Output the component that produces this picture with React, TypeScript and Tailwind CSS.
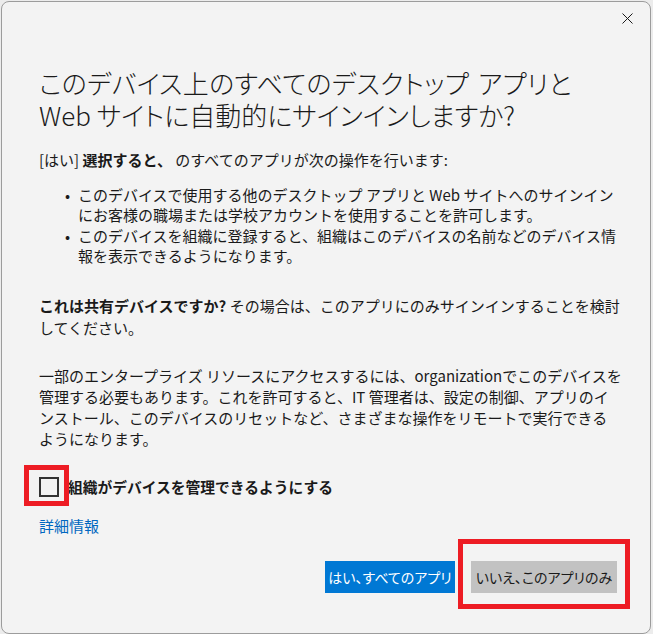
import React from "react";

const font = "font-['Noto_Sans_CJK_JP','Noto_Sans',sans-serif]";

export default function App() {
  return (
    <div className={`w-[653px] h-[634px] bg-[#ececec] pl-[1px] pt-[1px] ${font}`}>
      <div className="relative w-[650px] h-[633px] bg-[#f3f3f3] border border-[#9c9c9c] rounded-[8px] flex flex-col text-[#1a1a1a]">
        <div className="flex justify-end pt-[11px] pr-[17px]">
          <svg width="11" height="11" viewBox="0 0 11 11" className="text-[#1a1a1a]">
            <path d="M0.5 0.5 L10.5 10.5 M10.5 0.5 L0.5 10.5" stroke="currentColor" strokeWidth="1" fill="none" />
          </svg>
        </div>
        <div className="pl-[37px] pr-[30px] text-[15px]">
          <h1 className="mt-[43px] text-[26px] leading-[32px] font-[300] whitespace-nowrap [font-feature-settings:'palt']">
            <span className="[word-spacing:3px] tracking-[0.3px]">このデバイス上のすべてのデスクトップ アプリと</span><br />
            Web サイトに自動的にサインインしますか?
          </h1>
          <p className="mt-[18px] leading-[21px] whitespace-nowrap">
            [はい] <span className="font-bold">選択すると、</span> のすべてのアプリが次の操作を行います:
          </p>
          <ul className="mt-[15px] leading-[20px] whitespace-nowrap">
            <li className="flex">
              <span className="w-[39px] pl-[26px]">•</span>
              <span>
                このデバイスで使用する他のデスクトップ アプリと Web サイトへのサインイン<br />
                にお客様の職場または学校アカウントを使用することを許可します。
              </span>
            </li>
            <li className="flex mt-[1px]">
              <span className="w-[39px] pl-[26px]">•</span>
              <span>
                このデバイスを組織に登録すると、組織はこのデバイスの名前などのデバイス情<br />
                報を表示できるようになります。
              </span>
            </li>
          </ul>
          <p className="mt-[29px] leading-[22px] whitespace-nowrap">
            <span className="font-bold">これは共有デバイスですか?</span> その場合は、このアプリにのみサインインすることを検討<br />
            してください。
          </p>
          <p className="mt-[26px] leading-[21px] whitespace-nowrap">
            一部のエンタープライズ リソースにアクセスするには、organizationでこのデバイスを<br />
            管理する必要もあります。これを許可すると、IT 管理者は、設定の制御、アプリのイ<br />
            ンストール、このデバイスのリセットなど、さまざまな操作をリモートで実行できる<br />
            ようになります。
          </p>
          <div className="mt-[27px] flex items-center">
            <div className="relative w-[20px] h-[20px] border-2 border-[#333333] bg-[#f3f3f3]">
              <div className="absolute left-[-17px] top-[-14px] w-[45px] h-[41px] border-[5px] border-[#ed1c24]" />
            </div>
            <span className="ml-[9px] text-[14.75px] font-bold whitespace-nowrap">組織がデバイスを管理できるようにする</span>
          </div>
          <div className="mt-[18px] leading-[20px] text-[#0067c0]">詳細情報</div>
        </div>
        <div className="mt-[25px] flex justify-end pr-[33px] gap-[16px] text-[14px] whitespace-nowrap [font-feature-settings:'palt']">
          <button className="w-[130px] h-[32px] bg-[#0078d4] text-white">はい、すべてのアプリ</button>
          <div className="relative">
            <button className="w-[146px] h-[32px] bg-[#c2c2c2] text-[#1a1a1a]">いいえ、このアプリのみ</button>
            <div className="absolute left-[-13px] top-[-22px] w-[172px] h-[70px] border-[5px] border-[#ed1c24]" />
          </div>
        </div>
      </div>
    </div>
  );
}
